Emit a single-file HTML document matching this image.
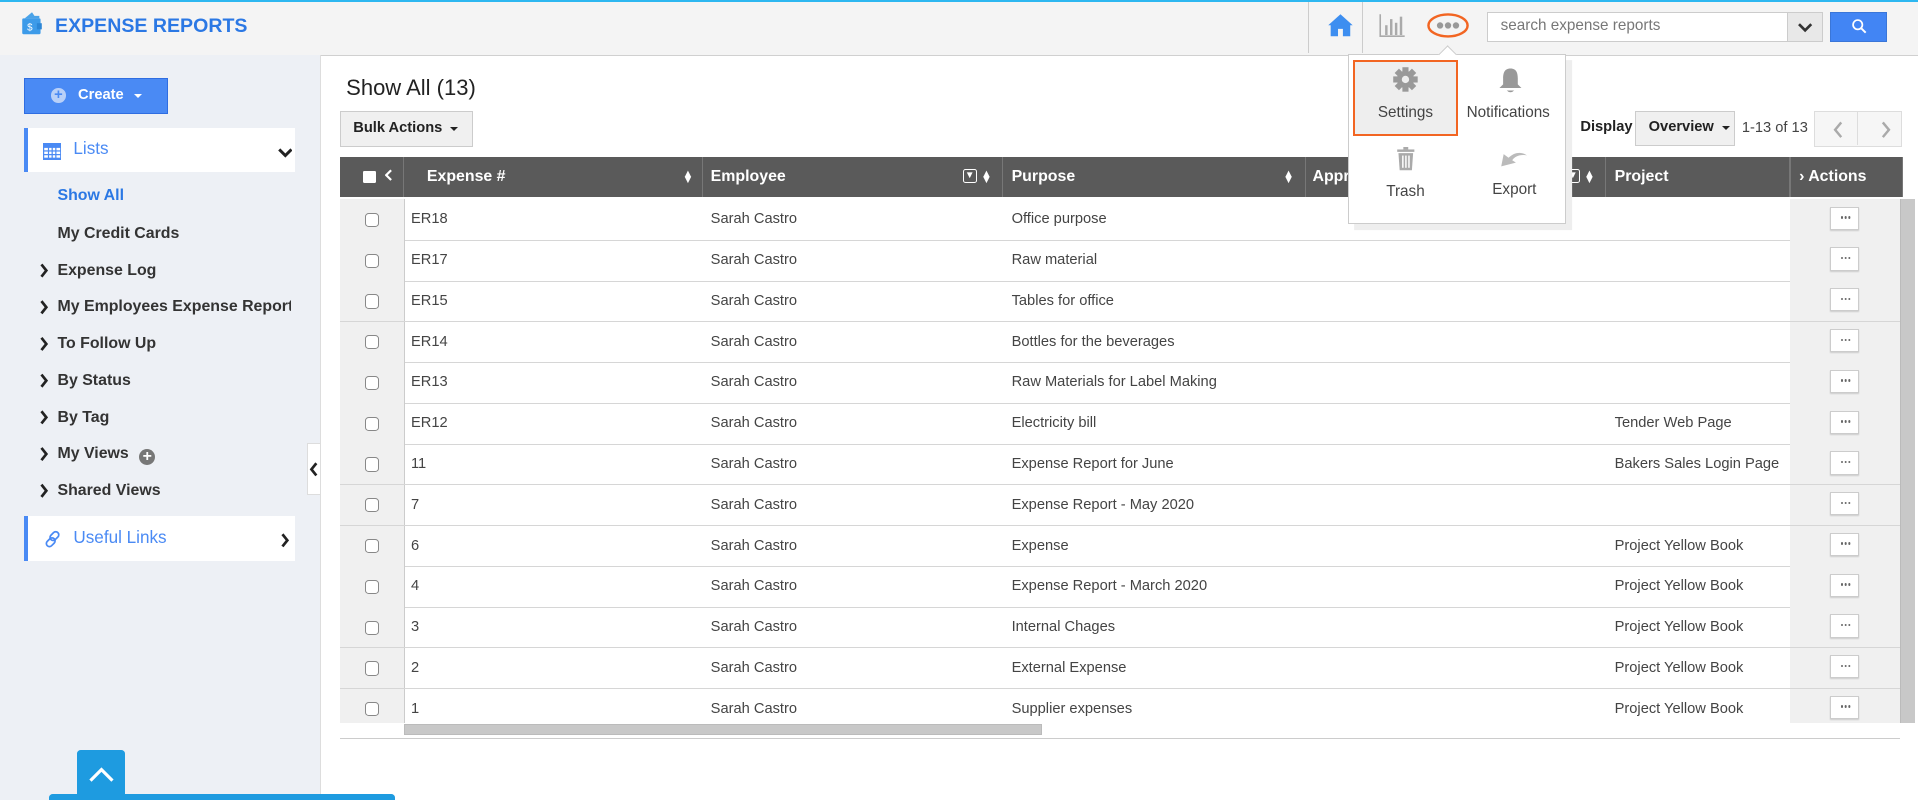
<!DOCTYPE html>
<html><head><meta charset="utf-8"><style>
html,body{margin:0;padding:0;width:1918px;height:800px;overflow:hidden;background:#fff}
#w{zoom:1.22321;width:1568px;height:654px;position:relative;font-family:"Liberation Sans",Arial,sans-serif;color:#333;overflow:hidden}
.a{position:absolute}
.top{left:0;top:0;width:1568px;height:43px;background:#f4f4f4;border-top:2px solid #2db7f0;border-bottom:1px solid #d0d0d0}
.side{left:0;top:45px;width:262px;height:609px;background:#edf0f5;border-right:1px solid #ddd}
.nav{left:33px;font-size:13px;font-weight:bold;color:#333;white-space:nowrap}
.nav b{display:inline-block;width:14px;height:12px;vertical-align:-1px;background:no-repeat}
.th{top:128px;height:33px;background:#5a5a5a;color:#fff;font-weight:bold;font-size:13px;line-height:33px;border-right:1px solid #777;box-sizing:border-box}
.row{left:278px;width:1275px;height:33px;border-bottom:1px solid #d6d6d6;font-size:12px;line-height:33px;color:#444}
.cb{left:0;width:52px;height:33px;background:#f0f0f0;border-right:1px solid #ccc}
.cb i{position:absolute;left:20px;top:11px;width:10px;height:10px;border:1px solid #888;border-radius:3px;background:#fff}
.ac{left:1185px;width:90px;height:33px;background:#f0f0f0}
.ac i{position:absolute;left:33px;top:6px;width:24px;height:19px;border:1px solid #ccc;background:#fff;box-shadow:0 1px 1px #ccc;box-sizing:border-box}
.ac i:after{content:"";position:absolute;left:8px;top:7px;width:2px;height:2px;background:#666;border-radius:1px;box-shadow:3px 0 #666,6px 0 #666}
.c{position:absolute;top:0}
.sort{position:absolute;font-size:9px;line-height:5px;top:12px}
</style></head><body><div id="w">
<div class="a top"></div>
<svg class="a" style="left:17px;top:9px" width="18" height="20" viewBox="0 0 18 20"><path d="M3 6 L9 1 L11 4 L15 4 L15 6Z" fill="#4aa3e8"/><rect x="1" y="6" width="15" height="13" rx="1" fill="#3d9be9"/><rect x="13" y="10" width="4" height="5" fill="#2b86d6"/><text x="5" y="16" font-size="8" fill="#fff" font-family="Liberation Sans">$</text></svg>
<div class="a" style="left:45px;top:12px;font-size:16px;font-weight:bold;color:#2b78e4">EXPENSE REPORTS</div>
<div class="a" style="left:1069px;top:2px;width:44px;height:41px;border-left:1px solid #ccc;border-right:1px solid #ccc;background:#f4f4f4"></div>
<svg class="a" style="left:1085px;top:11px" width="22" height="20" viewBox="0 0 22 20"><path d="M11 1 L1 10 L3 10 L3 19 L9 19 L9 13 L13 13 L13 19 L19 19 L19 10 L21 10Z" fill="#3d8ef0"/></svg>
<svg class="a" style="left:1127px;top:11px" width="22" height="20" viewBox="0 0 22 20"><path d="M1 1V19H21" stroke="#aaa" fill="none" stroke-width="1.3"/><rect x="5" y="10" width="2" height="8" fill="#aaa"/><rect x="9" y="5" width="2" height="13" fill="#aaa"/><rect x="13" y="8" width="2" height="10" fill="#aaa"/><rect x="17" y="3" width="2" height="15" fill="#aaa"/></svg>
<svg class="a" style="left:1166px;top:10px" width="36" height="22"><ellipse cx="18" cy="11" rx="16" ry="9" stroke="#f26522" stroke-width="2" fill="none"/><g fill="#999"><circle cx="11.5" cy="11" r="2.6"/><circle cx="18" cy="11" r="2.6"/><circle cx="24.5" cy="11" r="2.6"/></g></svg>
<div class="a" style="left:1216px;top:10px;width:246px;height:24px;border:1px solid #ccc;background:#fff;box-sizing:border-box;font-size:12.5px;color:#777;line-height:22px;padding-left:10px">search expense reports</div>
<div class="a" style="left:1462px;top:10px;width:28px;height:24px;border:1px solid #ccc;border-left:none;background:#e8e8e8;box-sizing:border-box"></div>
<svg class="a" style="left:1462px;top:10px" width="28" height="24"><path d="M9 10 L14 15 L19 10" stroke="#333" stroke-width="2.2" fill="none"/></svg>
<div class="a" style="left:1496px;top:10px;width:47px;height:24px;background:#4285f4;border:1px solid #3a76d8;box-sizing:border-box"></div>
<svg class="a" style="left:1513px;top:15px" width="14" height="14"><circle cx="5.5" cy="5.5" r="3.8" stroke="#fff" stroke-width="1.4" fill="none"/><path d="M8.5 8.5 L12 12" stroke="#fff" stroke-width="1.6"/></svg>

<div class="a side"></div>
<div class="a" style="left:20px;top:64px;width:117px;height:29px;background:#4a8af4;border:1px solid #2f6de1;box-sizing:border-box;color:#fff;font-size:12px;font-weight:bold;line-height:27px"><span style="position:absolute;left:21px;top:7px;width:12px;height:12px;border-radius:50%;background:#b9d0f8;color:#4a8af4;font-size:12px;line-height:12px;text-align:center">+</span><span style="position:absolute;left:43px">Create</span><span style="position:absolute;left:89px;top:12px;border:4px solid transparent;border-top-color:#fff"></span></div>
<div class="a" style="left:20px;top:105px;width:221px;height:36px;background:#fff;border-left:4px solid #4a8af4;box-sizing:border-box"></div>
<svg class="a" style="left:35px;top:117px" width="15" height="14"><rect x="0" y="0" width="15" height="14" fill="#4a8af4"/><g fill="#fff"><rect x="1" y="4" width="3" height="2"/><rect x="5" y="4" width="2" height="2"/><rect x="8" y="4" width="2" height="2"/><rect x="11" y="4" width="3" height="2"/><rect x="1" y="7" width="3" height="2"/><rect x="5" y="7" width="2" height="2"/><rect x="8" y="7" width="2" height="2"/><rect x="11" y="7" width="3" height="2"/><rect x="1" y="10" width="3" height="2"/><rect x="5" y="10" width="2" height="2"/><rect x="8" y="10" width="2" height="2"/><rect x="11" y="10" width="3" height="2"/></g></svg>
<div class="a" style="left:60px;top:114px;font-size:14px;color:#4a8af4">Lists</div>
<svg class="a" style="left:227px;top:120px" width="12" height="10"><path d="M1 2 L6 7 L11 2" stroke="#222" stroke-width="2.4" fill="none"/></svg>
<div class="a nav" style="left:47px;top:153px;color:#2b78e4">Show All</div>
<div class="a nav" style="left:47px;top:184px">My Credit Cards</div>
<div class="a nav" style="left:47px;top:214px">Expense Log</div>
<div class="a nav" style="left:47px;top:244px;width:191px;overflow:hidden">My Employees Expense Reports</div>
<div class="a nav" style="left:47px;top:274px">To Follow Up</div>
<div class="a nav" style="left:47px;top:304px">By Status</div>
<div class="a nav" style="left:47px;top:334px">By Tag</div>
<div class="a nav" style="left:47px;top:364px">My Views <span style="display:inline-block;width:13px;height:13px;border-radius:50%;background:#777;color:#fff;text-align:center;line-height:13px;font-size:13px;margin-left:5px;vertical-align:-2px">+</span></div>
<div class="a nav" style="left:47px;top:394px">Shared Views</div>
<svg class="a" style="left:32px;top:214px" width="10" height="200"><g stroke="#222" stroke-width="2.2" fill="none"><path d="M2 2 L6 7 L2 12"/><path d="M2 32 L6 37 L2 42"/><path d="M2 62 L6 67 L2 72"/><path d="M2 92 L6 97 L2 102"/><path d="M2 122 L6 127 L2 132"/><path d="M2 152 L6 157 L2 162"/><path d="M2 182 L6 187 L2 192"/></g></svg>
<div class="a" style="left:20px;top:422px;width:221px;height:37px;background:#fff;border-left:4px solid #4a8af4;box-sizing:border-box"></div>
<svg class="a" style="left:36px;top:433px" width="15" height="15"><g stroke="#4a8af4" stroke-width="1.4" fill="none"><rect x="6" y="1" width="5" height="8" rx="2.5" transform="rotate(45 8.5 5)"/><rect x="3" y="6" width="5" height="8" rx="2.5" transform="rotate(45 5.5 10)"/></g></svg>
<div class="a" style="left:60px;top:432px;font-size:14px;color:#4a8af4">Useful Links</div>
<svg class="a" style="left:229px;top:436px" width="8" height="12"><path d="M2 1 L6 6 L2 11" stroke="#222" stroke-width="2.2" fill="none"/></svg>
<div class="a" style="left:251px;top:362px;width:11px;height:43px;background:#fff;border:1px solid #ddd;border-right:none;box-sizing:border-box"></div>
<svg class="a" style="left:253px;top:378px" width="8" height="12"><path d="M6 1 L2 6 L6 11" stroke="#222" stroke-width="2.2" fill="none"/></svg>
<div class="a" style="left:40px;top:649px;width:283px;height:8px;background:#1e9be0;border-radius:3px"></div>
<div class="a" style="left:63px;top:613px;width:39px;height:41px;background:#1e9be0;border-radius:3px 3px 0 0"></div>
<svg class="a" style="left:72px;top:626px" width="22" height="14"><path d="M2 12 L11 3 L20 12" stroke="#fff" stroke-width="2.6" fill="none"/></svg>

<div class="a" style="left:283px;top:61px;font-size:18px;color:#222">Show All (13)</div>
<div class="a" style="left:278px;top:91px;width:109px;height:29px;background:#f0f0f0;border:1px solid #ccc;box-sizing:border-box;font-size:12px;font-weight:bold;line-height:27px;padding-left:10px;color:#222">Bulk Actions <span style="display:inline-block;border:4px solid transparent;border-top-color:#222;vertical-align:-2px;margin-left:3px"></span></div>
<div class="a" style="left:1292px;top:97px;font-size:12px;font-weight:bold;color:#222">Display</div>
<div class="a" style="left:1337px;top:91px;width:81px;height:28px;background:#f0f0f0;border:1px solid #ccc;box-sizing:border-box;font-size:12px;font-weight:bold;line-height:26px;padding-left:10px;color:#222">Overview <span style="display:inline-block;border:4px solid transparent;border-top-color:#222;vertical-align:-2px;margin-left:3px"></span></div>
<div class="a" style="left:1424px;top:98px;font-size:12px;color:#444">1-13 of 13</div>
<div class="a" style="left:1483px;top:91px;width:72px;height:29px;border:1px solid #ddd;background:#f6f6f6;box-sizing:border-box"><div style="position:absolute;left:34px;top:0;width:1px;height:27px;background:#ddd"></div></div>
<svg class="a" style="left:1495px;top:98px" width="60" height="16"><path d="M10 2 L5 8 L10 14" stroke="#aaa" stroke-width="2" fill="none"/><path d="M44 2 L49 8 L44 14" stroke="#aaa" stroke-width="2" fill="none"/></svg>

<div class="a th" style="left:278px;width:52px"><span style="position:absolute;left:19px;top:12px;width:10px;height:10px;background:#fff;border-radius:1px"></span><svg style="position:absolute;left:37px;top:10px" width="6" height="10"><path d="M5 1 L1 5 L5 9" stroke="#fff" stroke-width="1.8" fill="none"/></svg></div>
<div class="a th" style="left:330px;width:245px;padding-left:19px">Expense #<span class="sort" style="left:228px">▲<br>▼</span></div>
<div class="a th" style="left:575px;width:245px;padding-left:6px">Employee<span style="position:absolute;left:212px;top:10px;width:10px;height:10px;border:1px solid #fff;border-radius:2px;font-size:8px;line-height:10px;text-align:center">▼</span><span class="sort" style="left:227px">▲<br>▼</span></div>
<div class="a th" style="left:820px;width:248px;padding-left:7px">Purpose<span class="sort" style="left:229px">▲<br>▼</span></div>
<div class="a th" style="left:1068px;width:245px;padding-left:5px">Approver<span style="position:absolute;left:212px;top:10px;width:10px;height:10px;border:1px solid #fff;border-radius:2px;font-size:8px;line-height:10px;text-align:center">▼</span><span class="sort" style="left:227px">▲<br>▼</span></div>
<div class="a th" style="left:1313px;width:150px;padding-left:7px">Project</div>
<div class="a th" style="left:1463px;width:93px;padding-left:7px;border-left:1px solid #777">› Actions</div>
<div class="a" style="left:1553px;top:163px;width:12px;height:428px;background:#c8c8c8;border-left:1px solid #bbb"></div>

<div id="rows"></div>
<div class="a" style="left:278px;top:591px;width:1275px;height:12px;border-bottom:1px solid #ccc;background:#fff"></div>
<div class="a" style="left:330px;top:592px;width:522px;height:9px;background:#c8c8c8;border:1px solid #bbb;box-sizing:border-box"></div>

<div class="a" style="left:1102px;top:44px;width:178px;height:139px;background:#fff;border:1px solid #ccc;box-shadow:5px 5px 0 #eee;box-sizing:border-box"></div>
<div class="a" style="left:1178px;top:39px;width:10px;height:10px;background:#fff;border-left:1px solid #ccc;border-top:1px solid #ccc;transform:rotate(45deg)"></div>
<div class="a" style="left:1106px;top:49px;width:86px;height:62px;background:#eee;border:2px solid #f26522;box-sizing:border-box"></div>
<svg class="a" style="left:1138px;top:54px" width="22" height="22" viewBox="0 0 22 22"><g fill="#999"><circle cx="11" cy="11" r="7"/><g transform="translate(11 11)"><rect x="-2.5" y="-10" width="5" height="20"/><rect x="-2.5" y="-10" width="5" height="20" transform="rotate(45)"/><rect x="-2.5" y="-10" width="5" height="20" transform="rotate(90)"/><rect x="-2.5" y="-10" width="5" height="20" transform="rotate(135)"/></g></g><circle cx="11" cy="11" r="3" fill="#eee"/></svg>
<div class="a" style="left:1106px;top:85px;width:86px;text-align:center;font-size:12.5px;color:#444">Settings</div>
<svg class="a" style="left:1224px;top:54px" width="22" height="24"><path d="M11 2 C6 2 5 6 5 10 L5 15 L2 18 L20 18 L17 15 L17 10 C17 6 16 2 11 2Z" fill="#999"/><path d="M8 20 Q11 23 14 20Z" fill="#999"/></svg>
<div class="a" style="left:1192px;top:85px;width:82px;text-align:center;font-size:12.5px;color:#444">Notifications</div>
<svg class="a" style="left:1141px;top:120px" width="16" height="20"><rect x="1" y="2" width="14" height="2" fill="#aaa"/><rect x="6" y="0" width="4" height="2" fill="#aaa"/><path d="M2 5 H14 L13 19 H3Z" fill="#aaa"/><g fill="#fff"><rect x="5" y="7" width="1.2" height="10"/><rect x="7.5" y="7" width="1.2" height="10"/><rect x="10" y="7" width="1.2" height="10"/></g></svg>
<div class="a" style="left:1106px;top:150px;width:86px;text-align:center;font-size:12.5px;color:#444">Trash</div>
<svg class="a" style="left:1226px;top:121px" width="24" height="18"><path d="M1 15 L3 5 L7 8 C12 3 18 3 22 6 C16 5 12 7 10 10 L13 12Z" fill="#bbb"/></svg>
<div class="a" style="left:1196px;top:148px;width:84px;text-align:center;font-size:12.5px;color:#444">Export</div>
</div>
<script>
var d=[["ER18","Office purpose",""],["ER17","Raw material",""],["ER15","Tables for office",""],["ER14","Bottles for the beverages",""],["ER13","Raw Materials for Label Making",""],["ER12","Electricity bill","Tender Web Page"],["11","Expense Report for June","Bakers Sales Login Page"],["7","Expense Report - May 2020",""],["6","Expense","Project Yellow Book"],["4","Expense Report - March 2020","Project Yellow Book"],["3","Internal Chages","Project Yellow Book"],["2","External Expense","Project Yellow Book"],["1","Supplier expenses","Project Yellow Book"]];
var h="";d.forEach(function(r,i){var t=163+i*33.33;h+='<div class="a row" style="top:'+t+'px"><div class="c cb"><i></i></div><div class="c" style="left:58px">'+r[0]+'</div><div class="c" style="left:303px">Sarah Castro</div><div class="c" style="left:549px">'+r[1]+'</div><div class="c" style="left:1042px">'+r[2]+'</div><div class="c ac"><i></i></div></div>';});
document.getElementById("rows").outerHTML=h;
</script>
</body></html>
